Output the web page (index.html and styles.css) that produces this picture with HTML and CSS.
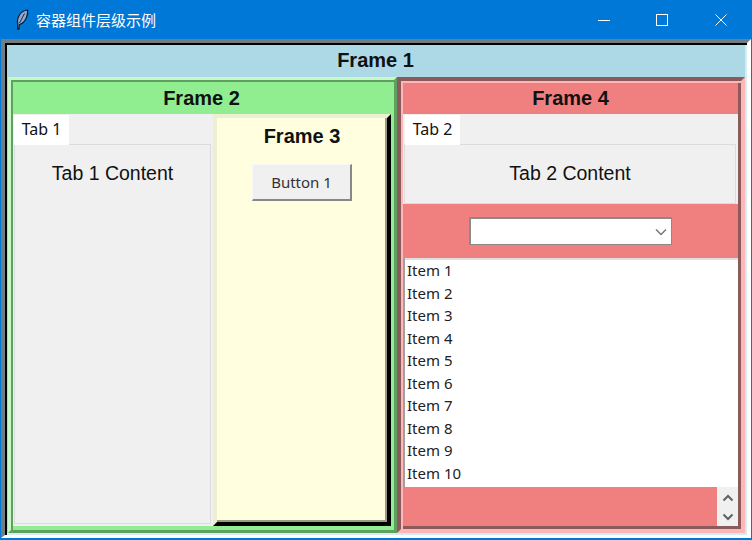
FILE: index.html
```html
<!DOCTYPE html>
<html lang="en">
<head>
    <meta charset="UTF-8">
    <title>容器组件层级示例</title>
    <link rel="stylesheet" href="styles.css">
</head>
<body>

<div class="window">
    <div class="titlebar">
        <svg class="feather" width="14" height="21" viewBox="0 0 14 21">
            <path d="M12.500 1C8.500 1.500 4.500 4.500 3 9c-.8 2.400-.8 4.300-.2 6L2.500 20l1.300.2L4.500 15.500c3-.8 5.500-3.500 7-7 1-2.400 1.500-5 1-7.500z" fill="#8fa9cf" stroke="#0c1c30" stroke-width="1.200"/>
            <path d="M9.500 4.500L4.500 14" stroke="#1a2c44" stroke-width="1"/>
        </svg>
        <span class="title">容器组件层级示例</span>
        <div class="controls">
            <svg class="ctl-min" width="12" height="12" viewBox="0 0 12 12"><path d="M0 6.500H12" stroke="#fff"/></svg>
            <svg width="12" height="12" viewBox="0 0 12 12"><rect x=".5" y=".5" width="11" height="11" fill="none" stroke="#fff"/></svg>
            <svg width="12" height="12" viewBox="0 0 12 12"><path d="M.5 .5L11.500 11.500M11.500 .5L.5 11.500" stroke="#fff"/></svg>
        </div>
    </div>

    <div class="frame1">
        <div class="frame1-title">Frame 1</div>
        <div class="frame1-body">
            <div class="frame2">
                <div class="frame2-title">Frame 2</div>
                <div class="frame2-body">
                    <div class="notebook nb-left">
                        <div class="tab">Tab 1</div>
                        <div class="pane">Tab 1 Content</div>
                    </div>
                    <div class="frame3">
                        <div class="frame3-title">Frame 3</div>
                        <button class="btn">Button 1</button>
                    </div>
                </div>
            </div>

            <div class="frame4">
                <div class="frame4-title">Frame 4</div>
                <div class="notebook nb-right">
                    <div class="tab">Tab 2</div>
                    <div class="pane pane-short">Tab 2 Content</div>
                </div>
                <div class="combo-row">
                    <div class="combo">
                        <svg width="12" height="8" viewBox="0 0 12 8"><path d="M1 1.500L6 6.500L11 1.500" fill="none" stroke="#777" stroke-width="1.500"/></svg>
                    </div>
                </div>
                <ul class="list">
                    <li>Item 1</li>
                    <li>Item 2</li>
                    <li>Item 3</li>
                    <li>Item 4</li>
                    <li>Item 5</li>
                    <li>Item 6</li>
                    <li>Item 7</li>
                    <li>Item 8</li>
                    <li>Item 9</li>
                    <li>Item 10</li>
                </ul>
                <div class="list-foot">
                    <div class="scrollbar">
                        <svg width="12" height="8" viewBox="0 0 12 8"><path d="M1.500 6.500L6 2L10.500 6.500" fill="none" stroke="#606060" stroke-width="2"/></svg>
                        <svg width="12" height="8" viewBox="0 0 12 8"><path d="M1.500 1.500L6 6L10.500 1.500" fill="none" stroke="#606060" stroke-width="2"/></svg>
                    </div>
                </div>
            </div>
        </div>
    </div>
</div>

</body>
</html>
```

FILE: styles.css
```css
html, body {
    margin: 0;
    padding: 0;
    overflow: hidden;
}
body {
    font-family: "Liberation Sans", Arial, sans-serif;
    color: #111;
}
.window {
    width: 752px;
    height: 540px;
    box-sizing: border-box;
    display: flex;
    flex-direction: column;
    background: #0078d7;
    padding: 0 1px 2px 1px;
}
.titlebar {
    height: 39px;
    flex: none;
    display: flex;
    align-items: center;
    color: #fff;
}
.feather {
    margin-left: 14px;
}
.title {
    margin-left: 7px;
    font-family: "Noto Sans CJK SC", sans-serif;
    font-size: 15px;
}
.controls {
    margin-left: auto;
    display: flex;
    gap: 47px;
    padding-right: 24px;
}
.ctl-min {
    margin-right: -1px;
}
.frame1 {
    flex: 1;
    min-height: 0;
    display: flex;
    flex-direction: column;
    background: #add8e6;
    border-style: solid;
    border-width: 4px 4px 3px 4px;
    border-color: #6f7e84 #fff #fff #6f7e84;
    box-shadow: inset 2px 2px 0 #000, inset -2px -2px 0 #d6ecf3;
}
.frame1-title {
    flex: none;
    height: 32px;
    margin: 2px 2px 0 1px;
    text-align: center;
    font-weight: bold;
    font-size: 20px;
    line-height: 30px;
}
.frame1-body {
    flex: 1;
    min-height: 0;
    display: flex;
    padding: 0 2px 2px 3px;
}
.frame2 {
    flex: 0 0 389px;
    box-sizing: border-box;
    display: flex;
    flex-direction: column;
    background: #90ee90;
    border: 3px solid;
    border-color: #c8f7c8 #5f9f5f #5f9f5f #c8f7c8;
    box-shadow: inset 2px 2px 0 #5f9f5f;
}
.frame2-title {
    flex: none;
    height: 32px;
    margin-top: 2px;
    padding-right: 2px;
    text-align: center;
    font-weight: bold;
    font-size: 20px;
    line-height: 32px;
}
.frame2-body {
    flex: 1;
    min-height: 0;
    display: flex;
    padding: 0 3px 4px 2px;
}
.notebook {
    background: #f0f0f0;
    display: flex;
    flex-direction: column;
}
.nb-left {
    flex: 0 0 200px;
    padding: 1px 0 2px 1px;
    box-sizing: border-box;
}
.tab {
    width: 55px;
    height: 30px;
    box-sizing: border-box;
    background: #fff;
    font-family: "Noto Sans", sans-serif;
    font-size: 16px;
    line-height: 28px;
    text-align: center;
    margin-bottom: -1px;
    position: relative;
}
.pane {
    flex: 1;
    margin-right: 2px;
    border: 1px solid #dcdcdc;
    font-size: 19.5px;
    line-height: 56px;
    text-align: center;
}
.frame3 {
    flex: 1;
    display: flex;
    flex-direction: column;
    align-items: center;
    background: #ffffe0;
    border-style: solid;
    border-width: 4px;
    border-color: #eeeed1 #000 #000 #eeeed1;
    box-shadow: inset -2px -2px 0 #9a9a86;
}
.frame3-title {
    font-weight: bold;
    font-size: 20px;
    line-height: 24px;
    margin-top: 6px;
}
.btn {
    width: 100px;
    height: 37px;
    margin-top: 16px;
    padding: 0;
    background: #f0f0f0;
    border-style: solid;
    border-width: 1px 2px 2px 1px;
    border-color: #f8f8f8 #888 #888 #f8f8f8;
    font-family: "Noto Sans", sans-serif;
    font-size: 15px;
    color: #333;
}
.frame4 {
    flex: 1;
    min-width: 0;
    box-sizing: border-box;
    display: flex;
    flex-direction: column;
    background: #f08080;
    border: 4px solid;
    border-color: #8b5a5a #ffb6b6 #ffb6b6 #8b5a5a;
    box-shadow: inset 2px 2px 0 #ffb6b6, inset -3px -3px 0 #8b5a5a;
    padding: 2px 3px 3px 2px;
}
.frame4-title {
    flex: none;
    height: 31px;
    text-align: center;
    font-weight: bold;
    font-size: 20px;
    line-height: 31px;
}
.nb-right {
    flex: none;
    height: 90px;
    box-sizing: border-box;
    padding: 1px 0 0 2px;
}
.nb-right .tab {
    flex: none;
}
.pane-short {
    margin-left: -1px;
    line-height: 56px;
    margin-right: 2px;
}
.combo-row {
    flex: none;
    height: 54px;
    display: flex;
    justify-content: center;
    align-items: center;
}
.combo {
    width: 203px;
    height: 28px;
    box-sizing: border-box;
    background: #fff;
    border: 1px solid #8a8a8a;
    border-width: 2px 1px 1px 2px;
    display: flex;
    align-items: center;
    justify-content: flex-end;
    padding-right: 4px;
}
.list {
    flex: none;
    list-style: none;
    margin: 0 0 0 1px;
    padding: 1px 0 0 2px;
    height: 229px;
    box-sizing: border-box;
    background: #fff;
    box-shadow: inset 0 2px 0 #e0e0e0;
    border-left: 1px solid #a0a0a0;
    font-family: "Noto Sans", sans-serif;
    font-size: 15px;
    color: #222;
}
.list li {
    height: 22.5px;
    line-height: 22.5px;
}
.list-foot {
    flex: 1;
    min-height: 0;
    display: flex;
    justify-content: flex-end;
}
.scrollbar {
    width: 21px;
    background: #f0f0f0;
    display: flex;
    flex-direction: column;
    align-items: center;
    justify-content: space-between;
    padding: 7px 0 5px;
    box-sizing: border-box;
}
```
